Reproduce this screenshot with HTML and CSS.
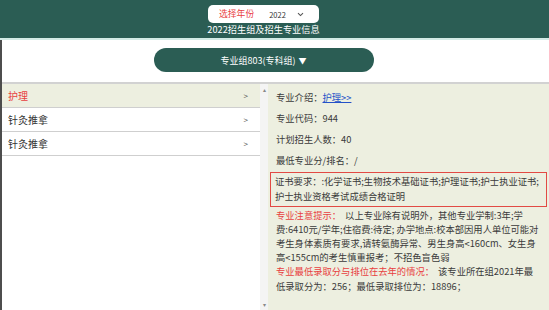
FILE: index.html
```html
<!DOCTYPE html>
<html lang="zh">
<head>
<meta charset="utf-8">
<link rel="stylesheet" href="styles.css">
</head>
<body>
<header class="header">
  <div class="year-select">
    <span class="year-label">选择年份</span>
    <span class="year-value">2022</span>
    <svg class="year-caret" width="7" height="5" viewBox="0 0 7 5"><path d="M1 1.2 L3.5 3.6 L6 1.2" fill="none" stroke="#555" stroke-width="1.1"/></svg>
  </div>
  <div class="subtitle">2022招生组及招生专业信息</div>
</header>
<main class="main">
  <div class="group-bar">
    <div class="group-pill">专业组803(专科组) <span class="tri">▼</span></div>
  </div>
  <div class="content">
    <ul class="major-list">
      <li class="major active"><span>护理</span><span class="chev">&gt;</span></li>
      <li class="major"><span>针灸推拿</span><span class="chev">&gt;</span></li>
      <li class="major"><span>针灸推拿</span><span class="chev">&gt;</span></li>
    </ul>
    <div class="scrollbar">
      <span class="arrow">&#9652;</span>
      <span class="arrow">&#9662;</span>
    </div>
    <section class="detail">
      <p class="row">专业介绍：<a class="link" href="#">护理&gt;&gt;</a></p>
      <p class="row">专业代码：944</p>
      <p class="row">计划招生人数：40</p>
      <p class="row">最低专业分/排名：/</p>
      <p class="cert">证书要求：:化学证书;生物技术基础证书;护理证书;护士执业证书;护士执业资格考试成绩合格证明</p>
      <p class="para note"><span class="red">专业注意提示：</span>以上专业除有说明外，其他专业学制:3年;学费:6410元/学年;住宿费:待定; 办学地点:校本部因用人单位可能对考生身体素质有要求,请转氨酶异常、男生身高&lt;160cm、女生身高&lt;155cm的考生慎重报考；不招色盲色弱</p>
      <p class="para last"><span class="red">专业最低录取分与排位在去年的情况：</span>该专业所在组2021年最低录取分为：256；最低录取排位为：18896；</p>
    </section>
  </div>
</main>
</body>
</html>
```

FILE: styles.css
```css
* { box-sizing: border-box; }
html, body { margin: 0; padding: 0; }
body {
  width: 549px;
  height: 310px;
  overflow: hidden;
  background: #fff;
  font-family: "Noto Sans CJK SC", "Microsoft YaHei", sans-serif;
  color: #333;
}
.header {
  height: 40px;
  background: #2b5d54;
  border-bottom: 2px solid #d3ebe6;
  display: flex;
  flex-direction: column;
  align-items: center;
  padding: 5px 22px 0 0;
}
.year-select {
  width: 111px;
  height: 18px;
  background: #fff;
  border-radius: 5px;
  display: flex;
  align-items: center;
  padding-left: 11px;
}
.year-label {
  color: #e8403f;
  font-size: 8.8px;
  line-height: 18px;
}
.year-value {
  font-size: 7.5px;
  margin-left: 15px;
  color: #333;
}
.year-caret { margin-left: 11px; }
.subtitle {
  color: #fff;
  font-size: 9.2px;
  line-height: 13px;
}
.main {
  border-left: 2px solid #4d4d4d;
  height: 270px;
}
.group-bar {
  height: 44px;
  display: flex;
  justify-content: center;
  padding: 8px 22px 0 0;
  border-bottom: 2px solid #d2d2d2;
}
.group-pill {
  width: 220px;
  height: 24px;
  margin-left: -2px;
  border-radius: 12px;
  background: #2b5d54;
  color: #fff;
  font-size: 9px;
  display: flex;
  align-items: center;
  justify-content: center;
}
.tri { font-size: 8px; margin-left: 3px; }
.content {
  display: flex;
  height: 226px;
}
.major-list {
  list-style: none;
  margin: 0;
  padding: 0;
  width: 258px;
  background: #fff;
}
.major {
  height: 24px;
  border-bottom: 1px solid #cfcfcf;
  display: flex;
  align-items: center;
  justify-content: space-between;
  padding: 0 12px 0 6px;
  font-size: 10px;
  color: #333;
}
.major.active {
  background: #edefe0;
  color: #e8403f;
}
.chev {
  color: #555;
  font-size: 8px;
}
.scrollbar {
  width: 8px;
  background: #f4f4f4;
  display: flex;
  flex-direction: column;
  justify-content: space-between;
  align-items: center;
  padding: 2px 0 1px;
}
.arrow {
  font-size: 6px;
  line-height: 8px;
  color: #888;
}
.detail {
  flex: 1;
  background: #edefe0;
  padding: 3px 2px 0 2px;
  font-size: 9.3px;
  color: #3a3a3a;
}
.row {
  margin: 0;
  padding: 3px 6px;
  line-height: 15px;
}
.link {
  color: #2451c8;
  text-decoration: underline;
}
.cert {
  margin: 1px 0 0;
  border: 1.5px solid #e24a44;
  padding: 1px 4px 2px;
  line-height: 15px;
}
.para {
  margin: 0;
  padding: 0 6px;
}
.note {
  margin-top: 1px;
  line-height: 14px;
}
.last { line-height: 15px; }
.red { color: #e8403f; margin-right: 4px; }
```
